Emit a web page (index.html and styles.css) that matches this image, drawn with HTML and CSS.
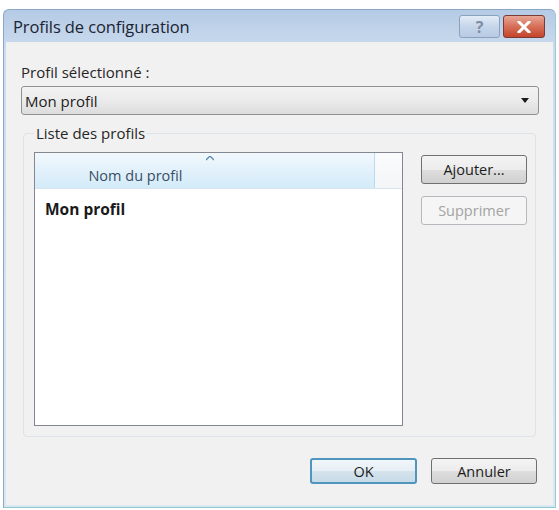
FILE: index.html
```html
<!DOCTYPE html>
<html lang="fr">
<head>
<meta charset="utf-8">
<title>Profils de configuration</title>
<link rel="stylesheet" href="styles.css">
</head>
<body>
<div class="window">
  <div class="titlebar">
    <span class="title">Profils de configuration</span>
    <div class="caption-buttons">
      <span class="cap help">?</span>
      <span class="cap close">
        <svg width="14" height="12" viewBox="0 0 14 12"><path d="M2 1 L12 11 M12 1 L2 11" stroke="#fff" stroke-width="3" stroke-linecap="square"/></svg>
      </span>
    </div>
  </div>
  <div class="client">
    <div class="label">Profil sélectionné :</div>
    <div class="combo">
      <span>Mon profil</span>
      <svg width="10" height="6" viewBox="0 0 10 6"><path d="M1 0 L9 0 L5 5 Z" fill="#1a1a1a"/></svg>
    </div>
    <fieldset class="group">
      <legend>Liste des profils</legend>
      <div class="group-body">
        <div class="listview">
          <div class="lv-header">
            <div class="lv-col">Nom du profil
              <svg class="sort" width="8" height="5" viewBox="0 0 8 5"><path d="M0 4 L4 0 L8 4" fill="none" stroke="#5b8bb3" stroke-width="1.4"/></svg>
            </div>
            <div class="lv-rest"></div>
          </div>
          <div class="lv-row">Mon profil</div>
        </div>
        <div class="side-buttons">
          <button class="btn">Ajouter...</button>
          <button class="btn disabled">Supprimer</button>
        </div>
      </div>
    </fieldset>
    <div class="footer">
      <button class="btn default">OK</button>
      <button class="btn">Annuler</button>
    </div>
  </div>
</div>
</body>
</html>
```

FILE: styles.css
```css
html, body {
  margin: 0;
  padding: 0;
  background: #ffffff;
}
body {
  width: 559px;
  height: 510px;
  overflow: hidden;
  font-family: "Open Sans", "Noto Sans", sans-serif;
  font-size: 15px;
  letter-spacing: 0;
  color: #1c1c1c;
}
.window {
  margin: 9px 0 0 3px;
  width: 553px;
  height: 499px;
  box-sizing: border-box;
  border: 1px solid #8aa7c4;
  border-bottom-color: #8cc6cf;
  border-right-color: #9fc9d6;
  border-radius: 6px 6px 0 0;
  background: linear-gradient(#b5cae5, #cbdcee 40px, #d9e8f0);
  display: flex;
  flex-direction: column;
  padding: 0 2px 2px 2px;
}
.titlebar {
  height: 32px;
  display: flex;
  align-items: center;
  justify-content: space-between;
  padding-left: 7px;
  flex: none;
}
.title {
  font-size: 16.5px;
  color: #1b2433;
  letter-spacing: -0.1px;
}
.caption-buttons {
  display: flex;
  gap: 3px;
  align-self: flex-start;
  margin-top: 5px;
  margin-right: 8px;
}
.cap {
  height: 23px;
  box-sizing: border-box;
  display: flex;
  align-items: center;
  justify-content: center;
  border-radius: 3px;
}
.help {
  width: 41px;
  border: 1px solid #8aa2bf;
  background: linear-gradient(#e3ecf6, #c6d6ea 50%, #b8cbe3);
  color: #7d8ea3;
  font-weight: 700;
  font-size: 16px;
}
.close {
  width: 42px;
  border: 1px solid #7c3a35;
  background: linear-gradient(#e8a796, #d66f58 50%, #c4442b);
}
.client {
  flex: 1;
  background: #f1f1f1;
  display: flex;
  flex-direction: column;
  padding: 0 14px 0 15px;
}
.label {
  margin-top: 20px;
  height: 20px;
  line-height: 20px;
  color: #262626;
}
.combo {
  margin-top: 4px;
  height: 29px;
  box-sizing: border-box;
  border: 1px solid #8f9192;
  border-radius: 3px;
  background: linear-gradient(#f3f3f3, #ebebeb 50%, #dcdcdc);
  display: flex;
  align-items: center;
  justify-content: space-between;
  padding: 0 8px 0 3px;
}
.group {
  margin: 9px 3px 0 2px;
  padding: 0 8px 0 10px;
  height: 313px;
  box-sizing: border-box;
  border: 1px solid #dde3e8;
  border-radius: 4px;
}
.group legend {
  padding: 0 2px;
  color: #262626;
  line-height: 18px;
}
.group-body {
  display: flex;
  justify-content: space-between;
  margin-top: 10px;
}
.listview {
  width: 369px;
  height: 274px;
  box-sizing: border-box;
  border: 1px solid #828790;
  background: #ffffff;
}
.lv-header {
  display: flex;
  height: 35px;
  border-bottom: 1px solid #d5e5f2;
}
.lv-col {
  position: relative;
  width: 340px;
  border-right: 1px solid #b9d9ee;
  background: linear-gradient(#f2f9fd, #e2f1fb 50%, #d3ebf9);
  display: flex;
  align-items: center;
  justify-content: center;
  padding-right: 138px;
  box-sizing: border-box;
  padding-top: 9px;
  font-size: 14.5px;
  color: #394d63;
}
.sort {
  position: absolute;
  left: 171px;
  top: 3px;
}
.lv-rest {
  flex: 1;
  background: linear-gradient(#fbfcfd, #f3f5f7);
}
.lv-row {
  padding: 9px 0 0 10px;
  font-weight: 700;
  font-size: 15.5px;
  color: #1a1a1a;
}
.side-buttons {
  display: flex;
  flex-direction: column;
  gap: 12px;
  margin-top: 3px;
}
.btn {
  font-family: "Open Sans", "Noto Sans", sans-serif;
  font-size: 14.5px;
  color: #1c1c1c;
  width: 106px;
  height: 29px;
  box-sizing: border-box;
  border: 1px solid #707070;
  border-radius: 3px;
  background: linear-gradient(#f4f4f4, #ececec 50%, #dedede 51%, #d0d0d0);
  padding: 0;
}
.btn.disabled {
  border-color: #b5b9bd;
  background: #f5f5f5;
  color: #a3a3a3;
}
.btn.default {
  border: 2px solid #4f95be;
  background: linear-gradient(#f1f6f9, #e6eff5 50%, #d4e3ec 51%, #c7dbe7);
}
.footer {
  display: flex;
  justify-content: flex-end;
  gap: 14px;
  margin-top: 21px;
  padding-right: 2px;
}
.footer .btn {
  height: 26px;
}
.footer .btn:first-child {
  width: 107px;
}
```
